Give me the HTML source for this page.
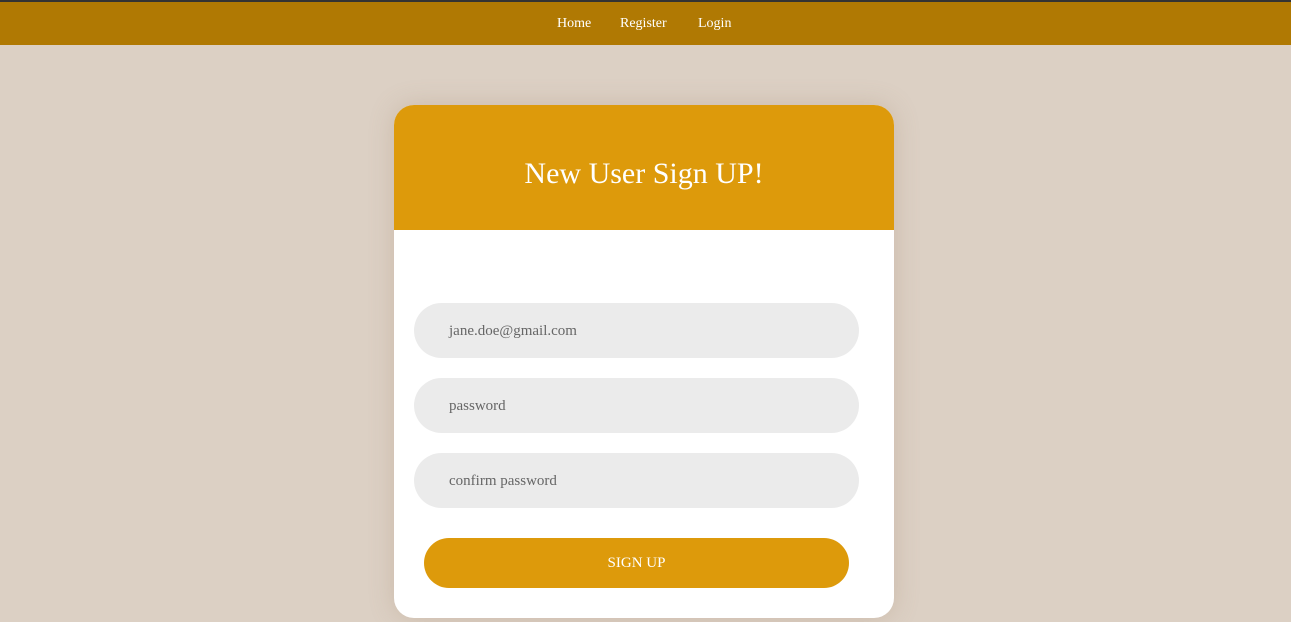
<!DOCTYPE html>
<html><head><style>
*{margin:0;padding:0;box-sizing:border-box}
body{width:1291px;height:622px;overflow:hidden;background:#dcd0c4;font-family:"Liberation Serif",serif;position:relative}
.nav{position:absolute;left:0;top:0;width:1291px;height:45px;background:#b07903;border-top:2px solid #333}
.nav a{position:absolute;top:14px;color:#fff;font-size:14px;text-decoration:none}
.card{position:absolute;left:394px;top:105px;width:500px;height:513px;background:#fff;border-radius:20px;overflow:hidden;box-shadow:0 0 25px rgba(150,120,90,.25)}
.hd{height:125px;background:#dd9a0b;color:#fff;font-size:30px;text-align:center;line-height:138px}
.in{position:absolute;left:20px;width:445px;height:55px;background:#ebebeb;border-radius:28px;color:#666;font-size:15px;padding-left:35px;line-height:56px}
.btn{position:absolute;left:30px;top:433px;width:425px;height:50px;background:#dd9a0b;border-radius:25px;color:#fff;font-size:15px;text-align:center;line-height:51px}
</style></head><body>
<div class="nav"><a style="left:557px">Home</a><a style="left:620px">Register</a><a style="left:698px">Login</a></div>
<div class="card">
<div class="hd">New User Sign UP!</div>
<div class="in" style="top:198px">jane.doe@gmail.com</div>
<div class="in" style="top:273px">password</div>
<div class="in" style="top:348px">confirm password</div>
<div class="btn">SIGN UP</div>
</div>
</body></html>
